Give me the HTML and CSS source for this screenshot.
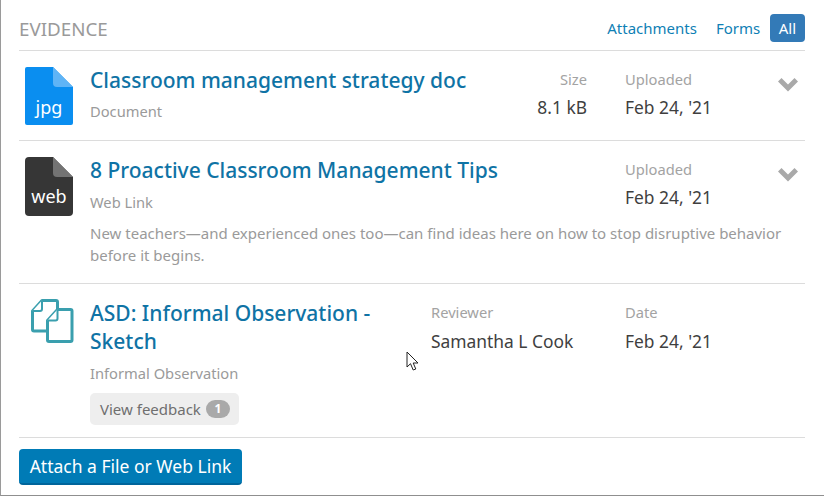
FILE: index.html
```html
<!DOCTYPE html>
<html lang="en">
<head>
<meta charset="utf-8">
<title>Evidence</title>
<link rel="stylesheet" href="styles.css">
</head>
<body>
<div class="panel">
  <header class="head">
    <h2 class="head-title">EVIDENCE</h2>
    <nav class="tabs">
      <a class="tab">Attachments</a>
      <a class="tab">Forms</a>
      <a class="tab active">All</a>
    </nav>
  </header>

  <section class="row row-1">
    <div class="icon">
      <svg width="48" height="58" viewBox="0 0 48 58"><path d="M2 0H28L48 20V56a2 2 0 0 1-2 2H2a2 2 0 0 1-2-2V2a2 2 0 0 1 2-2z" fill="#0a8ef0"/><path d="M28 0L48 20H32a4 4 0 0 1-4-4z" fill="#5fb4f6"/></svg>
      <span class="icon-label">jpg</span>
    </div>
    <div class="main">
      <a class="title">Classroom management strategy doc</a>
      <div class="sub">Document</div>
    </div>
    <div class="meta meta-size"><div class="label">Size</div><div class="value">8.1 kB</div></div>
    <div class="meta meta-date"><div class="label">Uploaded</div><div class="value">Feb 24, '21</div></div>
    <div class="chev"><svg width="20" height="14" viewBox="0 0 20 14"><path d="M0 3.5L3.5 0L10 6.5L16.5 0L20 3.5L10 13.5z" fill="#a9a9a9"/></svg></div>
  </section>

  <section class="row row-2">
    <div class="icon">
      <svg width="48" height="59" viewBox="0 0 48 59"><path d="M4 0H28L48 20V55a4 4 0 0 1-4 4H4a4 4 0 0 1-4-4V4a4 4 0 0 1 4-4z" fill="#363636"/><path d="M28 0L48 20H32a4 4 0 0 1-4-4z" fill="#737373"/></svg>
      <span class="icon-label">web</span>
    </div>
    <div class="main">
      <a class="title">8 Proactive Classroom Management Tips</a>
      <div class="sub">Web Link</div>
    </div>
    <div class="meta meta-date"><div class="label">Uploaded</div><div class="value">Feb 24, '21</div></div>
    <div class="chev"><svg width="20" height="14" viewBox="0 0 20 14"><path d="M0 3.5L3.5 0L10 6.5L16.5 0L20 3.5L10 13.5z" fill="#a9a9a9"/></svg></div>
    <p class="desc">New teachers—and experienced ones too—can find ideas here on how to stop disruptive behavior before it begins.</p>
  </section>

  <section class="row row-3">
    <div class="icon icon-forms">
      <svg width="46" height="45" viewBox="0 0 46 45" fill="#fff" stroke="#3a9fae" stroke-width="3" stroke-linejoin="round"><path d="M12 1.5H26a1.5 1.5 0 0 1 1.5 1.5V32H4a1.5 1.5 0 0 1-1.5-1.5V12z"/><path d="M12 1.5V10a2 2 0 0 1-2 2H2.5" stroke-width="2"/><path d="M27.5 10.5H40.5a1.5 1.5 0 0 1 1.5 1.5V41a1.5 1.5 0 0 1-1.5 1.5H19a1.5 1.5 0 0 1-1.5-1.5V21.5z"/><path d="M27.5 10.5V19.5a2 2 0 0 1-2 2H17.5" stroke-width="2"/></svg>
    </div>
    <div class="main main-3">
      <a class="title">ASD: Informal Observation - Sketch</a>
      <div class="sub">Informal Observation</div>
      <span class="feedback">View feedback <span class="badge">1</span></span>
    </div>
    <div class="meta meta-reviewer"><div class="label">Reviewer</div><div class="value">Samantha L Cook</div></div>
    <div class="meta meta-date"><div class="label">Date</div><div class="value">Feb 24, '21</div></div>
  </section>

  <footer class="foot">
    <button class="attach">Attach a File or Web Link</button>
  </footer>

  <svg class="cursor" width="13" height="21" viewBox="0 0 13 21"><path d="M1 1V16L4.5 12.7L7.2 19L9.8 18L7.2 12H12z" fill="#fff" stroke="#222" stroke-width="1"/></svg>
</div>
</body>
</html>
```
FILE: styles.css
```css
* { box-sizing: border-box; }
html, body { margin: 0; padding: 0; background: #fff; }
body { font-family: "Noto Sans", "Open Sans", sans-serif; width: 824px; height: 496px; overflow: hidden; }
.panel {
  position: relative;
  width: 824px;
  height: 496px;
  border-left: 1px solid #9a9a9a;
  border-bottom: 1px solid #8f8f8f;
  padding: 0 19px 0 18px;
}
.head {
  height: 51px;
  border-bottom: 1px solid #dcdcdc;
  display: flex;
  align-items: flex-start;
  justify-content: space-between;
}
.head-title {
  margin: 17px 0 0;
  font-size: 18.8px;
  line-height: 25px;
  font-weight: 400;
  color: #9a9a9a;
}
.tabs { display: flex; align-items: center; margin-top: 14px; }
.tab { font-size: 15px; line-height: 20px; color: #0f7fb5; padding: 4px 9.5px; border-radius: 4px; height: 28px; }
.tab.active { background: #337ab7; color: #fff; padding: 4px 9px; }
.row { display: grid; border-bottom: 1px solid #dcdcdc; }
.row-1 { height: 90px; padding-top: 15px; grid-template-columns: 71px 1fr 120px 153px 27px; }
.row-2 { height: 143px; padding-top: 15px; grid-template-columns: 71px 1fr 153px 27px; grid-template-rows: 59px auto; }
.row-3 { height: 154px; padding-top: 15px; grid-template-columns: 71px 341px 194px 1fr; }
.row-1 .icon, .row-2 .icon { margin-top: 1px; }
.icon { position: relative; width: 48px; height: 59px; margin-left: 6px; }
.icon svg { display: block; }
.icon-label { position: absolute; left: 0; right: 0; bottom: 8px; text-align: center; color: #fff; font-size: 18px; line-height: 24px; }
.row-1 .icon-label { bottom: 7px; }
.icon-forms { margin-left: 11px; }
.title { display: block; font-size: 21px; line-height: 28px; font-weight: 500; color: #0f73a5; }
.sub { font-size: 14.7px; line-height: 20px; color: #9a9a9a; margin-top: 8px; }
.label { font-size: 14.7px; line-height: 20px; color: #a3a3a3; }
.meta { padding-top: 3px; }
.value { font-size: 17.4px; line-height: 24px; color: #3f3f3f; margin-top: 6px; white-space: nowrap; }
.row-1 .sub { margin-top: 7px; }
.row-3 .value { margin-top: 7px; }
.meta-size { text-align: right; padding-right: 38px; }
.chev { padding-top: 12px; }
.chev svg { display: block; }
.desc {
  grid-column: 2 / -1;
  margin: 7px 0 0;
  font-size: 15px;
  line-height: 22px;
  color: #9a9a9a;
}
.feedback {
  display: inline-flex;
  align-items: center;
  gap: 5px;
  margin-top: 10px;
  height: 32px;
  padding: 0 9px 0 10px;
  background: #eeeeee;
  border-radius: 5px;
  font-size: 15px;
  color: #6f6f6f;
}
.badge {
  display: inline-block;
  min-width: 24px;
  height: 18px;
  border-radius: 9px;
  background: #a9a9a9;
  color: #fff;
  font-size: 12px;
  font-weight: 700;
  line-height: 18px;
  text-align: center;
}
.foot { padding-top: 11px; }
.attach {
  display: block;
  width: 223px;
  height: 36px;
  padding: 0;
  border: 0;
  border-bottom: 2px solid #00659b;
  border-radius: 4px;
  background: #007bb6;
  color: #fff;
  font-family: inherit;
  font-size: 17.5px;
  line-height: 32px;
}
.cursor { position: absolute; left: 405px; top: 351px; }
```
